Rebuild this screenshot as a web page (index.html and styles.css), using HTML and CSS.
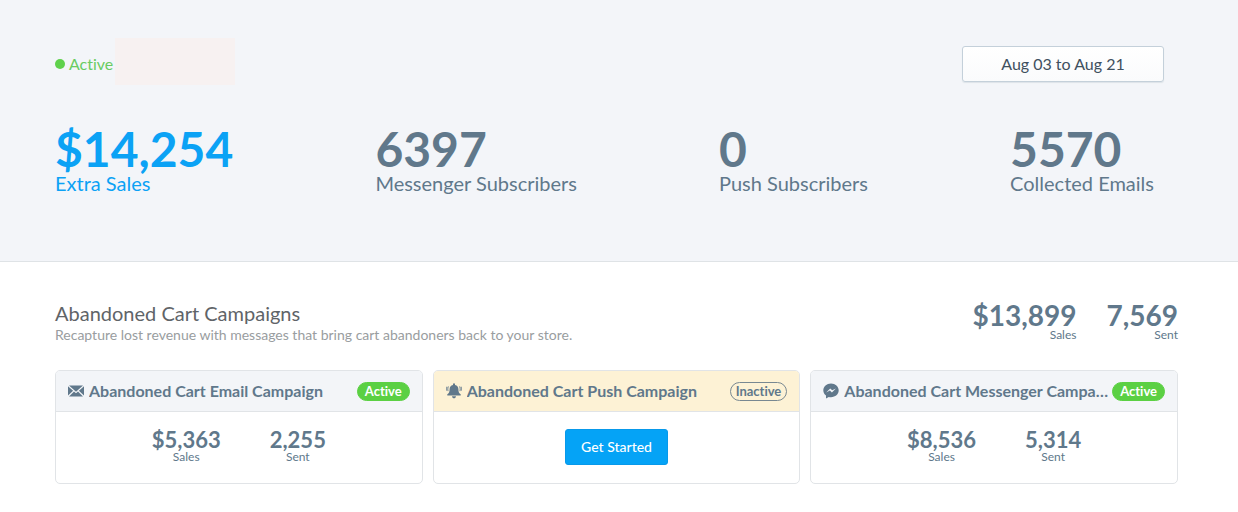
FILE: index.html
```html
<!DOCTYPE html>
<html lang="en">
<head>
<meta charset="utf-8">
<meta name="viewport" content="width=device-width, initial-scale=1">
<title>Campaigns</title>
<link rel="stylesheet" href="styles.css">
</head>
<body>
<header class="hero">
  <div class="toolbar">
    <div class="status"><span class="dot"></span><span>Active</span><span class="swatch"></span></div>
    <button class="date-range" type="button">Aug 03 to Aug 21</button>
  </div>
  <div class="stats">
    <div class="stat stat-primary"><div class="stat-value">$14,254</div><div class="stat-label">Extra Sales</div></div>
    <div class="stat"><div class="stat-value">6397</div><div class="stat-label">Messenger Subscribers</div></div>
    <div class="stat"><div class="stat-value">0</div><div class="stat-label">Push Subscribers</div></div>
    <div class="stat"><div class="stat-value">5570</div><div class="stat-label">Collected Emails</div></div>
  </div>
</header>
<main class="campaigns">
  <div class="section-head">
    <div>
      <h1 class="title">Abandoned Cart Campaigns</h1>
      <p class="subtitle">Recapture lost revenue with messages that bring cart abandoners back to your store.</p>
    </div>
    <div class="totals">
      <div class="total"><div class="total-value">$13,899</div><div class="total-label">Sales</div></div>
      <div class="total"><div class="total-value">7,569</div><div class="total-label">Sent</div></div>
    </div>
  </div>
  <div class="cards">
    <section class="card">
      <div class="card-head">
        <svg class="icon" viewBox="0 0 16 16" aria-hidden="true"><path fill="currentColor" d="M1 2.6h14L8 8.700zM0 3.300l5.100 4.500L0 12.600zM16 3.300v9.300l-5.100-4.800zM6 8.600l2 1.700 2-1.700 5 4.800H1z"/></svg>
        <h2 class="card-title">Abandoned Cart Email Campaign</h2>
        <span class="badge badge-active">Active</span>
      </div>
      <div class="card-body">
        <div class="metric"><div class="metric-value">$5,363</div><div class="metric-label">Sales</div></div>
        <div class="metric"><div class="metric-value">2,255</div><div class="metric-label">Sent</div></div>
      </div>
    </section>
    <section class="card">
      <div class="card-head card-head-warn">
        <svg class="icon" viewBox="0 0 16 16" aria-hidden="true"><path fill="currentColor" d="M8 .3a1 1 0 0 1 1 1v.6c2.300.5 3.400 2.100 3.400 4.100 0 3.200.7 4.300 2.300 5.200v1.300H1.300v-1.300C2.900 10.300 3.600 9.200 3.600 6c0-2 1.100-3.600 3.400-4.100v-.6a1 1 0 0 1 1-1zM6 13.300h4c-.2 1.400-1 2-2 2s-1.800-.6-2-2z"/><path fill="none" stroke="currentColor" stroke-width="1.200" stroke-linecap="round" opacity=".7" d="M2.300 3.800C1.700 5 1.700 6.500 2 7.700M.7 4.200c-.4 1-.4 2.100-.1 3M13.700 3.800c.6 1.200.6 2.700.3 3.900M15.300 4.200c.4 1 .4 2.100.1 3"/></svg>
        <h2 class="card-title">Abandoned Cart Push Campaign</h2>
        <span class="badge badge-inactive">Inactive</span>
      </div>
      <div class="card-body"><button class="start" type="button">Get Started</button></div>
    </section>
    <section class="card">
      <div class="card-head">
        <svg class="icon" viewBox="0 0 16 16" aria-hidden="true"><path fill="currentColor" fill-rule="evenodd" d="M8 .4c4.300 0 7.700 3 7.700 6.900s-3.400 6.900-7.700 6.900c-.8 0-1.500-.1-2.200-.3L3 15.400v-2.900C1.300 11.300.3 9.400.3 7.300.3 3.400 3.700.4 8 .4zM7.200 5.400 3.200 9.500l3.700-1.900 2 1.900 4-4.100-3.700 1.900z"/></svg>
        <h2 class="card-title">Abandoned Cart Messenger Campaign</h2>
        <span class="badge badge-active">Active</span>
      </div>
      <div class="card-body">
        <div class="metric"><div class="metric-value">$8,536</div><div class="metric-label">Sales</div></div>
        <div class="metric"><div class="metric-value">5,314</div><div class="metric-label">Sent</div></div>
      </div>
    </section>
  </div>
</main>
</body>
</html>
```
FILE: styles.css
```css
* { box-sizing: border-box; }
body { margin: 0; background: #fff; color: #60788b; font-family: Lato, "Liberation Sans", sans-serif; font-size: 16px; font-variant-ligatures: none; }
h1, h2, p { margin: 0; font-weight: 400; }
button { font-family: inherit; cursor: pointer; }

.hero { padding: 38px 74px 66px 55px; background: #f3f5f9; border-bottom: 1px solid #dfe3e6; }
.toolbar { display: flex; justify-content: space-between; align-items: center; }
.status { display: flex; align-items: center; color: #69cc62; line-height: 20px; }
.dot { width: 10px; height: 10px; margin-right: 4px; border-radius: 50%; background: #5fd14c; }
.swatch { width: 120px; height: 47px; margin: 0 0 4px 2px; background: #f7f1f1; }
.date-range { width: 202px; height: 36px; padding: 0; border: 1px solid #c4d0da; border-radius: 3px; background: linear-gradient(#fff, #fafbfc); box-shadow: 0 1px 1px #dde3e8; color: #3f5060; font-size: 16px; }

.stats { display: flex; justify-content: space-between; padding: 38px 10px 0 0; }
.stat-value { font-size: 48px; font-weight: 700; line-height: 44px; }
.stat-label { font-size: 20px; line-height: 24px; }
.stat-primary { color: #0ba2f5; }

.campaigns { padding: 38px 60px 28px 55px; }
.section-head { display: flex; justify-content: space-between; margin-bottom: 25px; }
.title { padding-top: 1px; color: #5f6468; font-size: 20px; line-height: 24px; }
.subtitle { color: #999da0; font-size: 14px; line-height: 20px; }
.totals { display: flex; gap: 30px; text-align: right; }
.total-value { font-size: 28px; font-weight: 700; line-height: 30px; }
.total-label { font-size: 12px; line-height: 10px; }

.cards { display: grid; grid-template-columns: repeat(3, minmax(0, 1fr)); gap: 10px; }
.card { overflow: hidden; border: 1px solid #e1e4e7; border-radius: 5px; background: #fff; }
.card-head { display: flex; align-items: center; height: 41px; padding: 0 12px; border-bottom: 1px solid #e1e4e7; background: #f3f5f8; }
.card-head-warn { background: #fdf2d5; }
.icon { flex: none; width: 16px; height: 16px; margin-right: 5px; }
.card-title { flex: 1; min-width: 0; margin-right: 1px; overflow: hidden; color: #60788b; font-size: 16px; font-weight: 700; line-height: 20px; text-overflow: ellipsis; white-space: nowrap; }
.badge { flex: none; padding: 0 7px; border: 1px solid; border-radius: 10px; font-size: 13px; font-weight: 700; line-height: 17px; }
.badge-active { border-color: #5bd043; background: #5bd043; color: #fff; }
.badge-inactive { padding: 0 5px; border-color: #788891; }
.card-body { display: flex; justify-content: center; align-items: center; gap: 49px; height: 71px; }
.metric { padding-bottom: 4px; text-align: center; }
.metric-value { font-size: 22px; font-weight: 700; line-height: 22px; }
.metric-label { font-size: 12px; line-height: 12px; }
.start { height: 36px; margin-bottom: 2px; padding: 0 15px; border: 1px solid #0899ea; border-radius: 3px; background: #05a3f6; color: #fff; font-size: 14px; font-weight: 500; }
```
